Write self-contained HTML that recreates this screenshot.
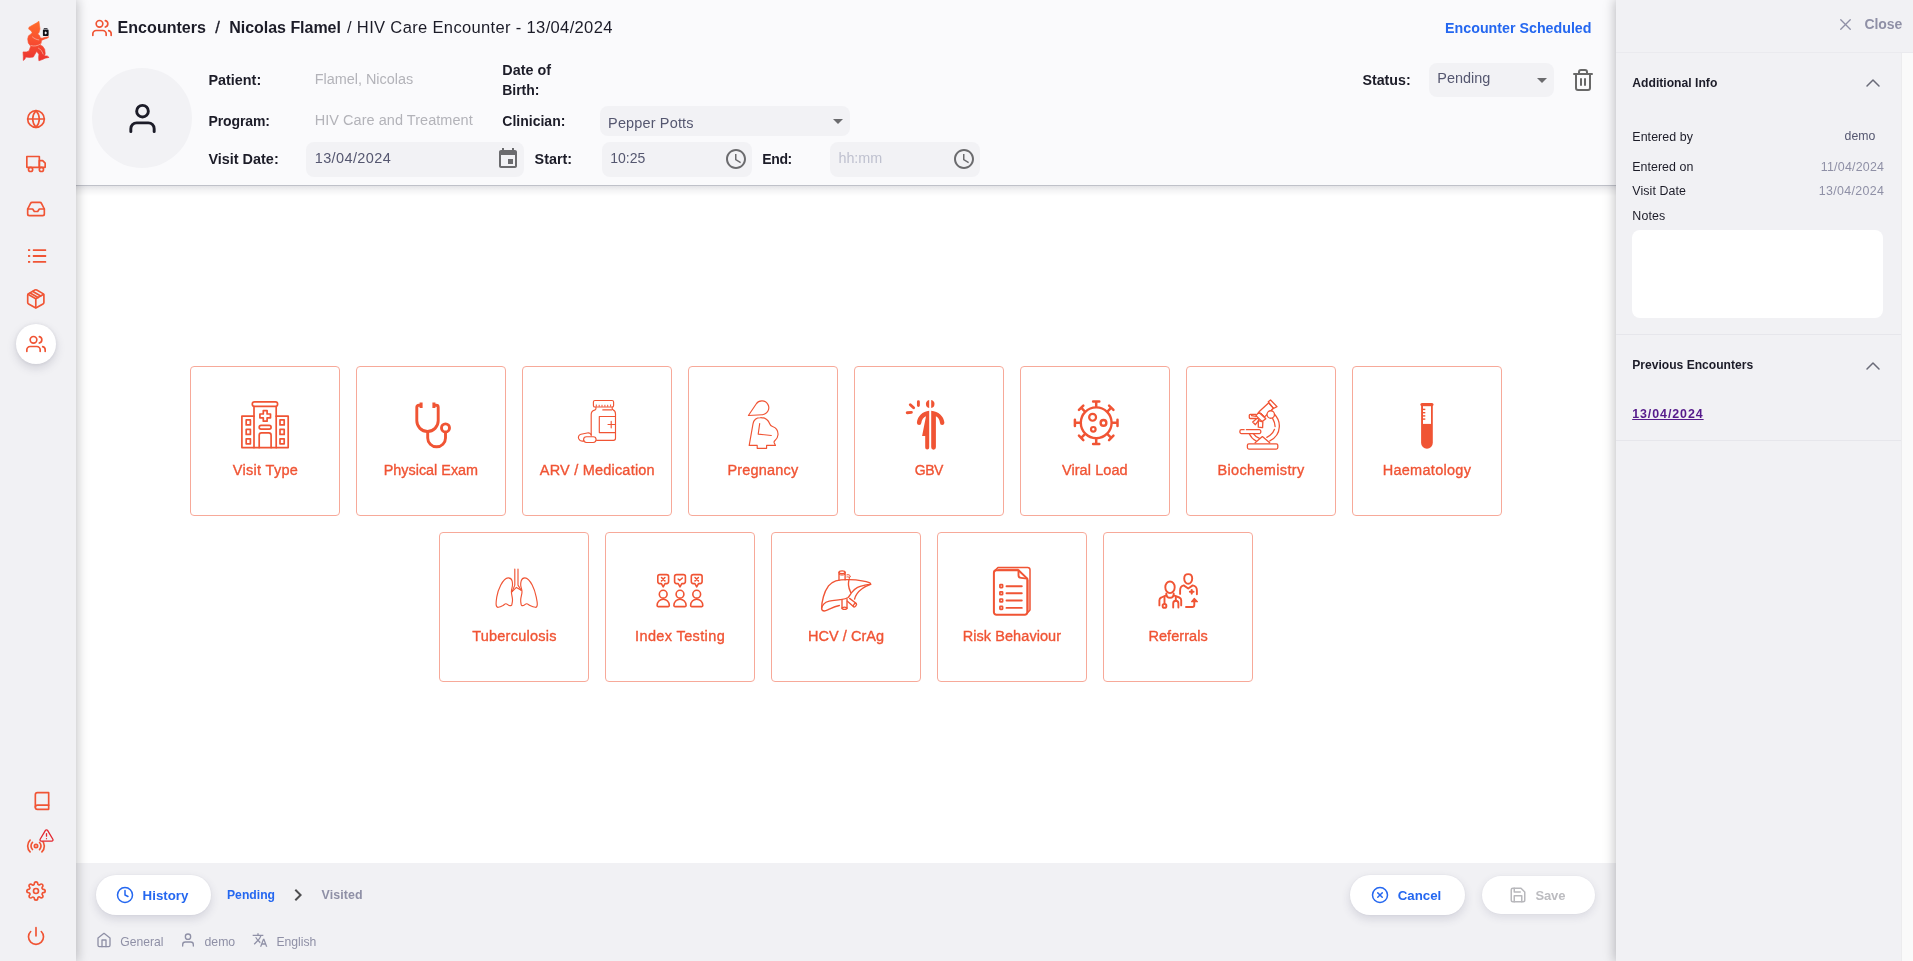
<!DOCTYPE html><html lang="en"><head><meta charset="utf-8"><title>HIV Care Encounter</title><style>*{box-sizing:border-box;margin:0;padding:0}
html,body{width:1913px;height:961px;overflow:hidden;background:#fff;font-family:"Liberation Sans", Arial, sans-serif;color:#1c1c28}
.ab,.ci,.t,.bx{position:absolute}
.t{white-space:nowrap;line-height:1;}
#side{position:absolute;left:0;top:0;width:76px;height:961px;background:#f1f1f4;box-shadow:0 0 11px 1px rgba(20,20,25,.27);z-index:5}
#head{position:absolute;left:76px;top:0;width:1540px;height:185px;background:#fafafc;z-index:2}
#headline{position:absolute;left:76px;top:185px;width:1540px;height:1px;background:#bfc1c9;z-index:2}
#headsh{position:absolute;left:76px;top:186px;width:1540px;height:10px;background:linear-gradient(#e4e4e7,#f4f4f5 45%,#fff);z-index:1}
#foot{position:absolute;left:76px;top:863px;width:1540px;height:98px;background:#f1f1f4;z-index:2}
#panel{position:absolute;left:1616px;top:0;width:297px;height:961px;background:#f1f1f4;box-shadow:0 0 11px 1px rgba(20,20,25,.27);z-index:6}
#track{position:absolute;left:1901px;top:53px;width:12px;height:908px;background:#fafafa;border-left:1px solid #ececee;z-index:7}
.hr{position:absolute;left:1616px;width:285px;height:1px;background:#e6e6eb;z-index:7}
.in{position:absolute;background:#f2f2f5;border-radius:8px}
.card{position:absolute;width:150px;height:150px;border:1px solid #f7a999;border-radius:4px;background:#fff}
.btn{position:absolute;background:#fff;border-radius:20px}
.z{z-index:8;will-change:transform}
</style></head><body><div id="side"></div><div id="head"></div><div id="headline"></div><div id="headsh"></div><div id="foot"></div><div id="panel"></div><div id="track"></div><div class="hr" style="top:52px;width:297px;background:#eaeaee"></div><div class="hr" style="top:334px"></div><div class="hr" style="top:440px"></div><div class="z" style="position:absolute;left:0;top:0;width:1913px;height:961px"><svg class="ab" style="left:0;top:0" width="76" height="76" viewBox="0 0 76 76">
<defs><linearGradient id="lg" x1="0" y1="21" x2="0" y2="61" gradientUnits="userSpaceOnUse"><stop offset="0" stop-color="#ff6c2a"/><stop offset=".45" stop-color="#fa5230"/><stop offset="1" stop-color="#ea3230"/></linearGradient></defs>
<path fill="url(#lg)" stroke="url(#lg)" stroke-width=".6" stroke-linejoin="round" d="M38.900 21.200 39.500 25.400 40 29 39 32.500 37.800 33.900 39.700 35.800 40.200 37.800 42 38.200 45.100 37.300 48.900 36.800 47.200 38.200 44.100 39.200 41.500 40.400 41.100 43 40.200 45.100 42.600 46.200 44.700 49.300 45.200 53.500 44.600 55.900 47.200 55.900 49.100 57.400 45.100 58.200 43 59.300 38.900 60.800 38.600 57.600 38.900 54.500 36.900 51.500 36.300 51.900 33.300 57.100 29.500 57.400 25.900 57.100 24.800 59.300 23.300 60.500 23.300 56.600 23 51.900 26.400 51.900 29 50.900 30.700 46.200 28.300 43 27.700 38.900 28.500 35.800 31.100 33.900 32.100 32.600 31.100 30.700 28.700 29.100 29 27.200 33.200 24.800 36.800 22.800Z"/>
<path d="M31 45.600c3 .9 6.600.4 9.400-1.500M32.500 37c1.800 1.500 3.800 2.600 6.300 2.900M38.500 48.200c2 .8 3.600 3 4.600 5.800" stroke="#f7d9cf" stroke-width=".7" fill="none" stroke-linecap="round" opacity=".8"/>
<path fill="#111118" d="M43.800 28h3.700v.800h-3.700zM43.900 29.600h3.700c.600 0 1 .400 1 1v4.400c0 .600-.400 1-1 1h-3.700c-.600 0-1-.400-1-1v-4.400c0-.600.400-1 1-1z"/>
<path d="M45.700 31.300 47 32.900 45.700 34.500 44.400 32.900z" fill="#f2f2f5"/>
</svg><svg class="ab" style="left:26px;top:109px" width="20" height="20" viewBox="0 0 24 24" fill="none" stroke="#f05434" stroke-width="2" stroke-linecap="round" stroke-linejoin="round" ><circle cx="12" cy="12" r="10"/><line x1="2" y1="12" x2="22" y2="12"/><path d="M12 2a15.3 15.3 0 0 1 4 10 15.3 15.3 0 0 1-4 10 15.3 15.3 0 0 1-4-10 15.3 15.3 0 0 1 4-10z"/></svg><svg class="ab" style="left:26px;top:154px" width="20" height="20" viewBox="0 0 24 24" fill="none" stroke="#f05434" stroke-width="2" stroke-linecap="round" stroke-linejoin="round" ><rect x="1" y="3" width="15" height="13"/><polygon points="16 8 20 8 23 11 23 16 16 16 16 8"/><circle cx="5.5" cy="18.500" r="2.500"/><circle cx="18.500" cy="18.500" r="2.500"/></svg><svg class="ab" style="left:26px;top:199px" width="20" height="20" viewBox="0 0 24 24" fill="none" stroke="#f05434" stroke-width="2" stroke-linecap="round" stroke-linejoin="round" ><polyline points="22 12 16 12 14 15 10 15 8 12 2 12"/><path d="M5.450 5.110L2 12v6a2 2 0 0 0 2 2h16a2 2 0 0 0 2-2v-6l-3.450-6.890A2 2 0 0 0 16.760 4H7.240a2 2 0 0 0-1.790 1.110z"/></svg><svg class="ab" style="left:26px;top:244px" width="22" height="24" viewBox="0 0 22 24" fill="#f05434"><rect x="2" y="5.200" width="2.200" height="1.800"/><rect x="2" y="11.100" width="2.200" height="1.800"/><rect x="2" y="17" width="2.200" height="1.800"/><rect x="6.800" y="5.200" width="13.400" height="1.800" rx=".5"/><rect x="6.800" y="11.100" width="13.400" height="1.800" rx=".5"/><rect x="6.800" y="17" width="13.400" height="1.800" rx=".5"/></svg><svg class="ab" style="left:25.2px;top:287.9px" width="21.6" height="21.6" viewBox="0 0 24 24" fill="none" stroke="#f05434" stroke-width="1.85" stroke-linecap="round" stroke-linejoin="round" ><path d="M21 16V8a2 2 0 0 0-1-1.730l-7-4a2 2 0 0 0-2 0l-7 4A2 2 0 0 0 3 8v8a2 2 0 0 0 1 1.730l7 4a2 2 0 0 0 2 0l7-4A2 2 0 0 0 21 16z"/><polyline points="3.270 6.960 12 12.010 20.730 6.960"/><line x1="12" y1="22.080" x2="12" y2="12"/><line x1="17.500" y1="8.800" x2="8.800" y2="3.800"/><line x1="14.500" y1="10.600" x2="5.700" y2="5.500"/></svg><div class="ab" style="left:16px;top:324px;width:40px;height:40px;border-radius:50%;background:#fff;box-shadow:0 4px 10px rgba(60,60,90,.18),0 0 4px rgba(60,60,90,.08)"></div><svg class="ab" style="left:26px;top:334px" width="20" height="20" viewBox="0 0 24 24" fill="none" stroke="#f05434" stroke-width="2" stroke-linecap="round" stroke-linejoin="round" ><path d="M17 21v-2a4 4 0 0 0-4-4H5a4 4 0 0 0-4 4v2"/><circle cx="9" cy="7" r="4"/><path d="M23 21v-2a4 4 0 0 0-3-3.870"/><path d="M16 3.130a4 4 0 0 1 0 7.750"/></svg><svg class="ab" style="left:32px;top:791px" width="20" height="20" viewBox="0 0 24 24" fill="none" stroke="#f05434" stroke-width="2" stroke-linecap="round" stroke-linejoin="round" ><path d="M4 19.500A2.500 2.500 0 0 1 6.500 17H20"/><path d="M6.500 2H20v20H6.500A2.500 2.500 0 0 1 4 19.500v-15A2.500 2.500 0 0 1 6.500 2z"/></svg><svg class="ab" style="left:26px;top:836px" width="20" height="20" viewBox="0 0 24 24" fill="none" stroke="#f05434" stroke-width="2" stroke-linecap="round" stroke-linejoin="round" ><circle cx="12" cy="12" r="2"/><path d="M16.240 7.760a6 6 0 0 1 0 8.490m-8.480-.010a6 6 0 0 1 0-8.490m11.310-2.820a10 10 0 0 1 0 14.140m-14.140 0a10 10 0 0 1 0-14.140"/></svg><svg class="ab" style="left:38.5px;top:828.4px" width="15" height="15" viewBox="0 0 24 24" fill="none" stroke="#e3262f" stroke-width="2.1" stroke-linecap="round" stroke-linejoin="round" ><path d="M10.290 3.860L1.820 18a2 2 0 0 0 1.710 3h16.940a2 2 0 0 0 1.710-3L13.710 3.860a2 2 0 0 0-3.420 0z" fill="#f1f1f4"/><line x1="12" y1="9" x2="12" y2="13"/><line x1="12" y1="17" x2="12.010" y2="17"/></svg><svg class="ab" style="left:26px;top:881px" width="20" height="20" viewBox="0 0 24 24" fill="none" stroke="#f05434" stroke-width="2" stroke-linecap="round" stroke-linejoin="round" ><circle cx="12" cy="12" r="3"/><path d="M19.400 15a1.650 1.650 0 0 0 .330 1.820l.060.060a2 2 0 0 1 0 2.830 2 2 0 0 1-2.830 0l-.060-.060a1.650 1.650 0 0 0-1.820-.330 1.650 1.650 0 0 0-1 1.510V21a2 2 0 0 1-2 2 2 2 0 0 1-2-2v-.090A1.650 1.650 0 0 0 9 19.400a1.650 1.650 0 0 0-1.820.330l-.060.060a2 2 0 0 1-2.830 0 2 2 0 0 1 0-2.830l.060-.060a1.650 1.650 0 0 0 .330-1.820 1.650 1.650 0 0 0-1.510-1H3a2 2 0 0 1-2-2 2 2 0 0 1 2-2h.090A1.650 1.650 0 0 0 4.600 9a1.650 1.650 0 0 0-.330-1.820l-.060-.060a2 2 0 0 1 0-2.830 2 2 0 0 1 2.830 0l.060.060a1.650 1.650 0 0 0 1.820.330H9a1.650 1.650 0 0 0 1-1.510V3a2 2 0 0 1 2-2 2 2 0 0 1 2 2v.090a1.650 1.650 0 0 0 1 1.510 1.650 1.650 0 0 0 1.820-.330l.060-.060a2 2 0 0 1 2.830 0 2 2 0 0 1 0 2.830l-.060.060a1.650 1.650 0 0 0-.330 1.820V9a1.650 1.650 0 0 0 1.510 1H21a2 2 0 0 1 2 2 2 2 0 0 1-2 2h-.090a1.650 1.650 0 0 0-1.510 1z"/></svg><svg class="ab" style="left:26px;top:926px" width="20" height="20" viewBox="0 0 24 24" fill="none" stroke="#f05434" stroke-width="2" stroke-linecap="round" stroke-linejoin="round" ><path d="M18.360 6.640a9 9 0 1 1-12.730 0"/><line x1="12" y1="2" x2="12" y2="12"/></svg><svg class="ab" style="left:92px;top:17.5px" width="20" height="20" viewBox="0 0 24 24" fill="none" stroke="#f05434" stroke-width="2" stroke-linecap="round" stroke-linejoin="round" ><path d="M17 21v-2a4 4 0 0 0-4-4H5a4 4 0 0 0-4 4v2"/><circle cx="9" cy="7" r="4"/><path d="M23 21v-2a4 4 0 0 0-3-3.870"/><path d="M16 3.130a4 4 0 0 1 0 7.750"/></svg><div class="ab" style="left:92px;top:68px;width:100px;height:100px;border-radius:50%;background:#f2f2f5"></div><svg class="ab" style="left:124.5px;top:101px" width="35" height="35" viewBox="0 0 24 24" fill="none" stroke="#1c1c28" stroke-width="2" stroke-linecap="round" stroke-linejoin="round" ><path d="M20 21v-2a4 4 0 0 0-4-4H8a4 4 0 0 0-4 4v2"/><circle cx="12" cy="7" r="4"/></svg><div class="in" style="left:306px;top:142px;width:218px;height:35px"></div><svg class="ab" style="left:496px;top:147px" width="24" height="24" viewBox="0 0 24 24" fill="#6b6b6e"><path d="M17 12h-5v5h5v-5zM16 1v2H8V1H6v2H5c-1.110 0-1.990.900-1.990 2L3 19c0 1.100.890 2 2 2h14c1.100 0 2-.900 2-2V5c0-1.100-.900-2-2-2h-1V1h-2zm3 18H5V8h14v11z"/></svg><div class="in" style="left:600px;top:106px;width:250px;height:30px"></div><svg class="ab" style="left:825.5px;top:108.7px" width="24" height="24" viewBox="0 0 24 24" fill="#6b6b6e"><path d="M7 10l5 5 5-5z"/></svg><div class="in" style="left:602px;top:142px;width:150px;height:34.500px"></div><svg class="ab" style="left:724px;top:147px" width="24" height="24" viewBox="0 0 24 24" fill="#6b6b6e"><path d="M11.990 2C6.470 2 2 6.480 2 12s4.470 10 9.990 10C17.520 22 22 17.520 22 12S17.520 2 11.990 2zM12 20c-4.420 0-8-3.580-8-8s3.580-8 8-8 8 3.580 8 8-3.580 8-8 8zM12.500 7H11v6l5.250 3.150.750-1.230-4.500-2.670z"/></svg><div class="in" style="left:830px;top:142px;width:150px;height:34.500px"></div><svg class="ab" style="left:952px;top:147px" width="24" height="24" viewBox="0 0 24 24" fill="#6b6b6e"><path d="M11.990 2C6.470 2 2 6.480 2 12s4.470 10 9.990 10C17.520 22 22 17.520 22 12S17.520 2 11.990 2zM12 20c-4.420 0-8-3.580-8-8s3.580-8 8-8 8 3.580 8 8-3.580 8-8 8zM12.500 7H11v6l5.250 3.150.750-1.230-4.500-2.670z"/></svg><div class="in" style="left:1429px;top:63px;width:125px;height:34px"></div><svg class="ab" style="left:1530px;top:68px" width="24" height="24" viewBox="0 0 24 24" fill="#6b6b6e"><path d="M7 10l5 5 5-5z"/></svg><svg class="ab" style="left:1571px;top:68px" width="24" height="24" viewBox="0 0 24 24" fill="none" stroke="#686868" stroke-width="2" stroke-linecap="round" stroke-linejoin="round" style="stroke-linecap:butt"><polyline points="3 6 5 6 21 6"/><path d="M19 6v14a2 2 0 0 1-2 2H7a2 2 0 0 1-2-2V6m3 0V4a2 2 0 0 1 2-2h4a2 2 0 0 1 2 2v2"/><line x1="10" y1="11" x2="10" y2="17"/><line x1="14" y1="11" x2="14" y2="17"/></svg><svg class="ab" style="left:1836px;top:14.7px" width="19" height="19" viewBox="0 0 24 24" fill="none" stroke="#8f90a6" stroke-width="1.7" stroke-linecap="round" stroke-linejoin="round" ><line x1="18" y1="6" x2="6" y2="18"/><line x1="6" y1="6" x2="18" y2="18"/></svg><svg class="ab" style="left:1861px;top:71px" width="24" height="24" viewBox="0 0 24 24" fill="none" stroke="#6a6b78" stroke-width="1.5" stroke-linecap="round" stroke-linejoin="round" ><polyline points="18 15 12 9 6 15"/></svg><svg class="ab" style="left:1861px;top:354px" width="24" height="24" viewBox="0 0 24 24" fill="none" stroke="#6a6b78" stroke-width="1.5" stroke-linecap="round" stroke-linejoin="round" ><polyline points="18 15 12 9 6 15"/></svg><div class="ab" style="left:1632px;top:230px;width:251px;height:88px;border-radius:8px;background:#fff"></div><div class="btn" style="left:96px;top:875px;width:115px;height:40px;box-shadow:0 4px 10px rgba(60,60,100,.16),0 0 3px rgba(60,60,100,.06)"></div><svg class="ab" style="left:116px;top:886.2px" width="18" height="18" viewBox="0 0 24 24" fill="none" stroke="#2467f0" stroke-width="2" stroke-linecap="round" stroke-linejoin="round" ><circle cx="12" cy="12" r="10"/><polyline points="12 6 12 12 16 14"/></svg><svg class="ab" style="left:285.8px;top:883px" width="24" height="24" viewBox="0 0 24 24" fill="#4e4e50"><path d="M10 6L8.590 7.410 13.170 12l-4.580 4.590L10 18l6-6z"/></svg><svg class="ab" style="left:96px;top:932px" width="16" height="16" viewBox="0 0 24 24" fill="none" stroke="#8f90a6" stroke-width="2" stroke-linecap="round" stroke-linejoin="round" ><path d="M3 9l9-7 9 7v11a2 2 0 0 1-2 2H5a2 2 0 0 1-2-2z"/><polyline points="9 22 9 12 15 12 15 22"/></svg><svg class="ab" style="left:180px;top:932px" width="16" height="16" viewBox="0 0 24 24" fill="none" stroke="#8f90a6" stroke-width="2" stroke-linecap="round" stroke-linejoin="round" ><path d="M20 21v-2a4 4 0 0 0-4-4H8a4 4 0 0 0-4 4v2"/><circle cx="12" cy="7" r="4"/></svg><svg class="ab" style="left:252.3px;top:932.3px" width="16" height="16" viewBox="0 0 24 24" fill="#8f90a6"><path d="M12.870 15.070l-2.540-2.510.030-.030c1.740-1.940 2.980-4.170 3.710-6.530H17V4h-7V2H8v2H1v1.990h11.170C11.500 7.920 10.440 9.750 9 11.350 8.070 10.320 7.300 9.190 6.690 8h-2c.730 1.630 1.730 3.170 2.980 4.560l-5.090 5.020L4 19l5-5 3.110 3.110.760-2.040zM18.500 10h-2L12 22h2l1.120-3h4.750L21 22h2l-4.500-12zm-2.620 7l1.620-4.330L19.120 17h-3.240z"/></svg><div class="btn" style="left:1350px;top:875px;width:115px;height:40px;box-shadow:0 4px 10px rgba(60,60,100,.16),0 0 3px rgba(60,60,100,.06)"></div><svg class="ab" style="left:1371px;top:886px" width="18" height="18" viewBox="0 0 24 24" fill="none" stroke="#2467f0" stroke-width="2" stroke-linecap="round" stroke-linejoin="round" ><circle cx="12" cy="12" r="10"/><line x1="15" y1="9" x2="9" y2="15"/><line x1="9" y1="9" x2="15" y2="15"/></svg><div class="btn" style="left:1482px;top:876px;width:113px;height:38px;box-shadow:0 3px 8px rgba(60,60,100,.12),0 0 2px rgba(60,60,100,.06)"></div><svg class="ab" style="left:1509px;top:886px" width="18" height="18" viewBox="0 0 24 24" fill="none" stroke="#b8b8bc" stroke-width="2" stroke-linecap="round" stroke-linejoin="round" ><path d="M19 21H5a2 2 0 0 1-2-2V5a2 2 0 0 1 2-2h11l5 5v11a2 2 0 0 1-2 2z"/><polyline points="17 21 17 13 7 13 7 21"/><polyline points="7 3 7 8 15 8"/></svg><div class="card" style="left:190px;top:366px"></div><svg class="ci" style="left:230px;top:390px" width="70" height="70" viewBox="0 0 70 70" fill="none" stroke="#f05434" stroke-linecap="round" stroke-linejoin="round" ><g stroke-width="1.7">
<rect x="22.3" y="11.9" width="25.3" height="4.5" rx="2.2"/>
<path d="M24 16.6V57.6M46.2 16.6V57.6"/>
<path d="M24 26.2H11.900V57.600H58.200V26.200H46.200"/>
<rect x="16.2" y="29.9" width="4.2" height="5"/><rect x="16.2" y="39.4" width="4.2" height="5"/><rect x="16.2" y="48.8" width="4.2" height="5"/>
<rect x="50" y="29.9" width="4.2" height="5"/><rect x="50" y="39.4" width="4.2" height="5"/><rect x="50" y="48.8" width="4.2" height="5"/>
<path d="M33.3 20.6h3.8v3.4h3.4v3.8h-3.4v3.4h-3.8v-3.4h-3.4v-3.8h3.4z" stroke-linejoin="round"/>
<rect x="29.2" y="35.4" width="11.9" height="3.7" rx="1.85"/>
<path d="M29.2 57.6V45.2a2.3 2.3 0 0 1 2.3-2.3h7.3a2.3 2.3 0 0 1 2.3 2.3V57.6"/>
</g></svg><div class="card" style="left:356px;top:366px"></div><svg class="ci" style="left:396px;top:390px" width="70" height="70" viewBox="0 0 70 70" fill="none" stroke="#f05434" stroke-linecap="round" stroke-linejoin="round" ><g stroke-width="2.9" stroke-linecap="butt">
<path d="M25.1 15.3H22.8a2 2 0 0 0-2 2V30.8a10.7 10.7 0 0 0 21.4 0V17.3a2 2 0 0 0-2-2H37.9"/>
<path d="M25.1 12.6V18.1M37.9 12.6V18.1" stroke-width="3" stroke-linecap="butt"/>
<path d="M31.7 41.5V47.9a8.9 8.9 0 0 0 17.8 0V42.6"/>
<circle cx="49.5" cy="37.9" r="4"/>
</g></svg><div class="card" style="left:522px;top:366px"></div><svg class="ci" style="left:562px;top:390px" width="70" height="70" viewBox="0 0 70 70" fill="none" stroke="#f05434" stroke-linecap="round" stroke-linejoin="round" ><g stroke-width="1.15">
<rect x="31.4" y="10.5" width="20.2" height="6.5" rx="1.6"/>
<path d="M34.3 14.9v1.4M37.2 15.2v1.2M40 15.2v1.2M42.9 15.2v1.2M45.7 15.2v1.2M48.6 14.9v1.4" stroke-width="1"/>
<path d="M33.9 17.2v1.6c0 .8-.6 1.1-1.4 1.3-2 .5-3.3 2.2-3.3 4.4V46"/>
<path d="M50.2 17.2v1.6c0 .6.3.9.9 1.1 1.6.6 2.4 2.200 2.400 4.200V48.300a2 2 0 0 1-2 2H34.600"/>
<path d="M40.800 19.900h8.700"/>
<path d="M53.400 26.500H37.300V42.600H53.400"/>
<path d="M49.200 31.400v6.400M46 34.500h6.600"/>
<rect x="21.600" y="46.700" width="12.500" height="5.800" rx="2.900"/>
<path d="M21.900 50.900c-1.800.6-4.200-.2-5.200-2.200-.9-2 .2-3.900 2.300-4.500l6.200-1.200c1.500-.3 3.100.200 3.800 1.500"/>
</g></svg><div class="card" style="left:688px;top:366px"></div><svg class="ci" style="left:728px;top:390px" width="70" height="70" viewBox="0 0 70 70" fill="none" stroke="#f05434" stroke-linecap="round" stroke-linejoin="round" ><g stroke-width="1.15">
<path d="M20.400 25.500 28.160 13.950A6.900 6.900 0 1 1 34.300 24.700Z"/>
<path d="M21.200 55.400 25 33.800c.7-3.800 3.600-6.200 7.400-6.200 4.500-.1 7.700 2.100 9.300 6.200.5 1.400 1.300 2.200 2.800 2.700 3.700 1.300 5.700 4.400 5.500 8.200-.100 2.400-1.300 4.300-3.200 6-.700.600-.900 1.200-.600 2l1.300 2.700H38.600v2.900H29.200v-2.900z"/>
<path d="M31.700 33.500 30.200 44.100 43.300 45.500"/>
</g></svg><div class="card" style="left:854px;top:366px"></div><svg class="ci" style="left:894px;top:390px" width="70" height="70" viewBox="0 0 70 70" fill="none" stroke="#f05434" stroke-linecap="round" stroke-linejoin="round" ><g fill="#f05434" stroke="none">
<path d="M35.200 9.900a4.200 4.200 0 0 0 0 8.200z"/>
<path d="M37.200 9.900a4.200 4.200 0 0 1 0 8.200z"/>
<path d="M35.200 20.700V57.600a2 2 0 0 1-4 0V45.900H28.100L32 26.200c-2.400 1.100-4.400 3.400-4.700 6.700a2.200 2.200 0 0 1-4.400-.4c.700-6.400 5.600-11.300 12.300-11.800z"/>
<path d="M37.200 20.700V57.300a2.350 2.350 0 0 0 4.700 0V26.200c2.200 1.100 3.800 3.400 4.100 6.700a2.200 2.200 0 0 0 4.400-.4c-.700-6.400-5.900-11.300-13.200-11.800z"/>
</g>
<g stroke-width="2.9">
<path d="M24.400 11.800V15.600M16.300 14.700l3.300 3.100M13.200 22.700l4.200-.300"/>
</g></svg><div class="card" style="left:1020px;top:366px"></div><svg class="ci" style="left:1060px;top:390px" width="70" height="70" viewBox="0 0 70 70" fill="none" stroke="#f05434" stroke-linecap="round" stroke-linejoin="round" ><circle cx="36.2" cy="32.8" r="15.4" stroke-width="2.4"/><path d="M36.20 16.60L36.20 11.50M33.10 11.50L39.30 11.50M47.66 21.34L51.26 17.74M49.07 15.55L53.45 19.93M52.40 32.80L57.50 32.80M57.50 29.70L57.50 35.90M47.66 44.26L51.26 47.86M53.45 45.67L49.07 50.05M36.20 49.00L36.20 54.10M39.30 54.10L33.10 54.10M24.74 44.26L21.14 47.86M23.33 50.05L18.95 45.67M20.00 32.80L14.90 32.80M14.90 35.90L14.90 29.70M24.74 21.34L21.14 17.74M18.95 19.93L23.33 15.55" stroke-width="2.5"/><circle cx="32.6" cy="27.3" r="3.45" stroke-width="2.2"/><circle cx="43.5" cy="32.9" r="2.85" stroke-width="2.4"/><circle cx="33.3" cy="39.3" r="2.3" stroke-width="2.2"/></svg><div class="card" style="left:1186px;top:366px"></div><svg class="ci" style="left:1226px;top:390px" width="70" height="70" viewBox="0 0 70 70" fill="none" stroke="#f05434" stroke-linecap="round" stroke-linejoin="round" ><g stroke-width="1.3">
<rect x="21.400" y="53.800" width="30.400" height="5.300" rx="1.500"/>
<path d="M18.100 39.700H15.400a1.500 1.500 0 0 0-1.500 1.500v.900a1.500 1.500 0 0 0 1.500 1.500H33.300a1.500 1.500 0 0 0 1.500-1.500V41.200a1.500 1.500 0 0 0-1.500-1.500H20.400"/>
<path d="M44.550 10 51 16.600 47.500 18.500 42.300 11.800z"/>
<path d="M42.900 13.300 47.300 18.100" stroke-width="1.100"/>
<path d="M42.500 13.100 33.300 21.600M47.050 18.500 39.100 26.400"/>
<path d="M32.800 22.200 39.800 28.700 36.200 31.600 30 25.600z"/>
<path d="M34.800 22.900 39.100 27" stroke-width="1"/>
<path d="M30 24.300H24.300a1 1 0 0 0-1 1v2.200a1 1 0 0 0 1 1h5.600M30.400 26.400 25.400 25.700" />
<path d="M31.400 28.100 33.100 29.900 29.400 34.700 26.700 32z"/>
<path d="M32.300 30.600 36.850 31.800 36.600 37.600 32.300 37.200z"/>
<circle cx="44.760" cy="24.500" r="3.750" fill="#fff"/>
<path d="M48.500 24.300C52.500 28.500 53.600 33 53.300 37 53 43 49.500 48 43.700 51"/>
<path d="M46.600 28.300C48.200 31 49 34 49.100 36.600M48.500 39.300C47.300 42.800 44.600 45.600 40.800 47.300"/>
<path d="M29.100 52.800 36.400 46.600 43.700 52.800"/>
<path d="M23.300 43.700C24.800 47 27 49.400 30.200 51M27.300 43.700C28.800 45.900 30.800 47.500 33.500 48.400"/>
</g></svg><div class="card" style="left:1352px;top:366px"></div><svg class="ci" style="left:1392px;top:390px" width="70" height="70" viewBox="0 0 70 70" fill="none" stroke="#f05434" stroke-linecap="round" stroke-linejoin="round" ><g stroke="none" fill="#f05434">
<rect x="28.400" y="13.100" width="13.100" height="3" rx="1.500"/>
<path d="M29.100 14.500H40.800V52.800a5.850 5.850 0 0 1-11.700 0z"/>
<rect x="31" y="16.200" width="8" height="17.700" fill="#fff"/>
<rect x="31" y="18.700" width="2.300" height="1.400"/><rect x="31" y="22" width="2.300" height="1.400"/><rect x="31" y="25.200" width="2.300" height="1.400"/><rect x="31" y="28.400" width="2.300" height="1.400"/>
</g></svg><div class="card" style="left:439px;top:532px"></div><svg class="ci" style="left:479px;top:556px" width="70" height="70" viewBox="0 0 70 70" fill="none" stroke="#f05434" stroke-linecap="round" stroke-linejoin="round" ><g stroke-width="1.15">
<path d="M35.800 13.100V29.100L33.100 35.600M39 13.100V29.100L42.200 34.300"/>
<path d="M33.100 35.600 37.400 31.400 42.200 34.300"/>
<path d="M29.100 21.800c-2.600 0-5.200 3.200-7.300 7.300-1.900 3.700-3.400 7.700-4 11.700-.400 2.700-.800 5.100-.700 7.300.100 2.500 1 3.300 2.200 3.200 1.800-.100 3.200-.900 4.700-1.800 1.100-.700 1.800-1.800 2.900-1.800 1.300 0 2.100 1.500 3.300 1.800 1.200.300 2.400.200 2.600-.700.500-2.300.800-3.300.700-5.100-.100-2.700-1.100-5.300-1.100-8 0-2.400 1-4.300 1.100-6.600.100-1.600-.100-2.900-.400-4.300-.500-2.100-2.200-3-4-3z"/>
<path d="M45.900 21.800c2.600 0 5.200 3.200 7.300 7.300 1.900 3.700 3.200 7.700 4 11.700.500 2.700 1.100 5.100 1.100 7.300 0 2.500-.800 3.300-1.900 3.200-1.800-.100-3.700-.900-5.400-1.800-1.300-.700-2.200-1.800-3.300-1.800-1.300 0-2.100 1.500-3.300 1.800-1.200.300-2.100.200-2.200-.700-.400-2.300-.600-3.300-.500-5.100.100-2.700 1.300-5.300 1.300-8 0-2.400-1.200-4.300-1.300-6.600-.100-1.600.100-2.900.500-4.300.600-2.100 1.900-3 3.700-3z"/>
</g></svg><div class="card" style="left:605px;top:532px"></div><svg class="ci" style="left:645px;top:556px" width="70" height="70" viewBox="0 0 70 70" fill="none" stroke="#f05434" stroke-linecap="round" stroke-linejoin="round" ><g stroke-width="1.6"><path d="M16.4 27.600H14.8a2 2 0 0 1-2-2V20.600a2 2 0 0 1 2-2H21.6a2 2 0 0 1 2 2V25.600a2 2 0 0 1-2 2H20.0L18.2 30.900z"/><path d="M16.5 21.500 19.9 24.900M19.9 21.500 16.5 24.900" stroke-width="1.5"/><circle cx="18.2" cy="38.200" r="3.900"/><path d="M12.1 49.600c0-3.700 2.700-6.300 6.100-6.300s6.100 2.600 6.100 6.300a1 1 0 0 1-1 1H13.1a1 1 0 0 1-1-1z"/><path d="M33.2 27.600H31.6a2 2 0 0 1-2-2V20.600a2 2 0 0 1 2-2H38.4a2 2 0 0 1 2 2V25.600a2 2 0 0 1-2 2H36.8L35.0 30.900z"/><path d="M33.1 23.100 34.6 24.600 37.4 21.900" stroke-width="1.4"/><circle cx="35" cy="38.200" r="3.900"/><path d="M28.9 49.600c0-3.700 2.700-6.300 6.100-6.300s6.100 2.600 6.100 6.300a1 1 0 0 1-1 1H29.9a1 1 0 0 1-1-1z"/><path d="M49.9 27.600H48.3a2 2 0 0 1-2-2V20.600a2 2 0 0 1 2-2H55.1a2 2 0 0 1 2 2V25.600a2 2 0 0 1-2 2H53.5L51.7 30.900z"/><path d="M50.0 21.500 53.4 24.900M53.4 21.500 50.0 24.900" stroke-width="1.5"/><circle cx="51.7" cy="38.200" r="3.900"/><path d="M45.6 49.600c0-3.700 2.700-6.300 6.100-6.300s6.100 2.600 6.100 6.300a1 1 0 0 1-1 1H46.6a1 1 0 0 1-1-1z"/></g></svg><div class="card" style="left:771px;top:532px"></div><svg class="ci" style="left:811px;top:556px" width="70" height="70" viewBox="0 0 70 70" fill="none" stroke="#f05434" stroke-linecap="round" stroke-linejoin="round" ><g stroke-width="1.35">
<path d="M28.400 49.500c-3.500.800-6.600 2-9.500 3.300-2.200 1-4.100 2.200-5.600 2.200-1.700 0-2.700-1.100-2.700-2.800 0-4.200.800-7.700 1.800-11.400 1.200-4.400 2.900-7.900 5.100-10.900 2-2.700 4.400-4.200 7.300-5.100 4.400-1 8.700-1.200 13.100-1.100 4.400.100 8.800.400 13.100 1.100 2.500.400 5.100.900 7.300 1.800 1 .400 1.500 1.200 1.300 1.800"/>
<path d="M59.600 28.400c-2.200.100-3.900.300-5.700.700-2.600.600-5.100 1.100-7.300 2.200-2.400 1.200-4.200 3-5.800 5.100-1.300 1.700-2.200 3.700-3.700 5.100-2.200 1.500-5.100 1.800-8 2.200-3.600.500-7.300.700-10.900 1.500-2.200.500-4.100 1.300-5.500 2.900-1 1.200-1.700 2.600-2.100 4.300"/>
<path d="M59.600 28.400c-3.300 1.100-6.200 2.500-8.600 4.400-2 1.500-3.800 3.100-5.100 5.100-1.100 1.600-1.800 3.300-2.300 5.100"/>
<path d="M37.900 23.700c-.300 1.900-.500 3.600-.400 5.400.200 2.600 1.100 4.900 2.200 7.300"/>
<path d="M28 24.100V16.300M34.100 23.800V16.300"/><ellipse cx="31.050" cy="16.300" rx="3.050" ry="1.400"/>
<path d="M28.200 18.400c1.500 1 4.200 1 5.700 0" stroke-width="1"/>
<path d="M35.900 18.800c1.800-.500 3.300.200 3.500 1.600M35.900 20.900c1.300-.300 2.200.100 2.400 1M38.900 20.600c-.200 1.100-.800 2.300-1 3" stroke-width="1"/>
<path d="M31 43.600V52.200M36 43V52.200"/><ellipse cx="33.500" cy="52.200" rx="2.500" ry="1.100"/>
<path d="M36.400 45.300 42.400 50.600M38.600 42.400 45 47.300"/><ellipse cx="43.900" cy="49.100" rx="1.200" ry="2.100" transform="rotate(38 43.900 49.100)"/>
</g></svg><div class="card" style="left:937px;top:532px"></div><svg class="ci" style="left:977px;top:556px" width="70" height="70" viewBox="0 0 70 70" fill="none" stroke="#f05434" stroke-linecap="round" stroke-linejoin="round" ><g stroke-width="2">
<path d="M41.500 14.200H19.400a2.500 2.500 0 0 0-2.500 2.500V56.300a2.500 2.500 0 0 0 2.500 2.500H47.800a2.500 2.500 0 0 0 2.500-2.500V22.600z"/>
<path d="M41.500 14.400V19.300a2.600 2.600 0 0 0 2.600 2.600l6 .700" stroke-width="1.900"/>
<path d="M17.400 15.100 21 11.400H50.600a2.400 2.400 0 0 1 2.400 2.400V54.100L49.700 57.700" stroke-width="1.500"/>
<path d="M21.500 13.300H41" stroke-width="1"/>
<path d="M51.700 24V55" stroke-width=".6"/>
<rect x="22.900" y="28.700" width="2.700" height="2.900" rx=".5" stroke-width="1.700"/><rect x="22.900" y="35.800" width="2.700" height="2.900" rx=".5" stroke-width="1.700"/><rect x="22.900" y="43" width="2.700" height="2.900" rx=".5" stroke-width="1.700"/><rect x="22.900" y="50.400" width="2.700" height="2.900" rx=".5" stroke-width="1.700"/>
<path d="M29.500 30.200H44.800M29.500 37.300H44.800M29.500 44.500H44.800M29.500 51.900H44.800" stroke-width="1.900"/>
</g></svg><div class="card" style="left:1103px;top:532px"></div><svg class="ci" style="left:1143px;top:556px" width="70" height="70" viewBox="0 0 70 70" fill="none" stroke="#f05434" stroke-linecap="round" stroke-linejoin="round" ><g stroke-width="1.9">
<ellipse cx="27" cy="31.300" rx="4.700" ry="5.800"/>
<path d="M23.300 37.400c0 2.700 1.600 4.400 3.700 4.400s3.700-1.700 3.700-4.400"/>
<path d="M23.200 39.300 18.300 41.500c-1.200.500-1.900 1.500-1.900 2.800V49.400M30.800 39.300 36.300 41.500c1.200.500 1.900 1.500 1.900 2.800V49.400"/>
<path d="M21.500 40.800V47.600M32.800 40.800V44.700"/>
<circle cx="21.500" cy="49.900" r="1.900"/>
<path d="M30.200 51.600V47.400a2.600 2.600 0 0 1 5.200 0V51.600"/>
<path d="M45.200 18.100c2.500 0 4 1.900 4 4.300 0 2.900-1.800 5.400-4 5.400s-4-2.500-4-5.400c0-2.400 1.500-4.300 4-4.300z"/>
<path d="M37.100 37.900V34.500c0-2.900 1.500-4.700 3.600-5.100L45.200 32.500 49.700 29.400c2.400.400 4.200 2.200 4.200 5.100V38.200"/>
<path d="M48.700 34v3.600M46.900 35.800h3.600" stroke-width="2.100"/>
<path d="M43 51H49.300a2 2 0 0 0 2-2V45.500"/>
<path d="M48.600 45.700 51.300 42.400 54.400 45.700z" fill="#f05434" stroke-width="1.200"/>
</g></svg><span class="t" id="t0" style="left:117.60px;top:18.60px;font-size:16.07px;font-weight:700;color:#1c1c28;letter-spacing:0.003px;">Encounters</span><span class="t" id="t1" style="left:215.30px;top:19.60px;font-size:16.53px;font-weight:400;color:#1c1c28;letter-spacing:0.006px;-webkit-text-stroke:.3px #1c1c28;">/</span><span class="t" id="t2" style="left:229.30px;top:19.60px;font-size:16.0px;font-weight:700;color:#1c1c28;letter-spacing:-0.034px;">Nicolas Flamel</span><span class="t" id="t3" style="left:347.00px;top:19.60px;font-size:16.56px;font-weight:400;color:#1c1c28;letter-spacing:0.331px;">/ HIV Care Encounter - 13/04/2024</span><span class="t" id="t4" style="left:1445.10px;top:21.00px;font-size:14.24px;font-weight:700;color:#2467f0;letter-spacing:0.004px;">Encounter Scheduled</span><span class="t" id="t5" style="left:208.40px;top:73.10px;font-size:14.4px;font-weight:700;color:#1c1c28;letter-spacing:0.003px;">Patient:</span><span class="t" id="t6" style="left:208.40px;top:114.00px;font-size:14.0px;font-weight:700;color:#1c1c28;letter-spacing:-0.091px;">Program:</span><span class="t" id="t7" style="left:208.40px;top:151.70px;font-size:14.43px;font-weight:700;color:#1c1c28;letter-spacing:0.003px;">Visit Date:</span><span class="t" id="t8" style="left:502.30px;top:62.70px;font-size:14.37px;font-weight:700;color:#1c1c28;letter-spacing:0.005px;">Date of</span><span class="t" id="t9" style="left:502.30px;top:82.80px;font-size:14.0px;font-weight:700;color:#1c1c28;letter-spacing:-0.066px;">Birth:</span><span class="t" id="t10" style="left:502.30px;top:114.00px;font-size:14.02px;font-weight:700;color:#1c1c28;letter-spacing:0.002px;">Clinician:</span><span class="t" id="t11" style="left:534.60px;top:151.70px;font-size:14.36px;font-weight:700;color:#1c1c28;letter-spacing:0.000px;">Start:</span><span class="t" id="t12" style="left:762.20px;top:151.70px;font-size:14.0px;font-weight:700;color:#1c1c28;letter-spacing:-0.336px;">End:</span><span class="t" id="t13" style="left:1362.40px;top:72.90px;font-size:14.25px;font-weight:700;color:#1c1c28;letter-spacing:0.001px;">Status:</span><span class="t" id="t14" style="left:314.70px;top:72.30px;font-size:14.41px;font-weight:400;color:#b3b3b9;letter-spacing:0.002px;">Flamel, Nicolas</span><span class="t" id="t15" style="left:314.70px;top:112.90px;font-size:14.49px;font-weight:400;color:#b3b3b9;letter-spacing:0.048px;">HIV Care and Treatment</span><span class="t" id="t16" style="left:314.70px;top:150.90px;font-size:14.49px;font-weight:400;color:#555770;letter-spacing:0.400px;">13/04/2024</span><span class="t" id="t17" style="left:608.10px;top:116.20px;font-size:14.49px;font-weight:400;color:#555770;letter-spacing:0.150px;">Pepper Potts</span><span class="t" id="t18" style="left:610.30px;top:151.00px;font-size:14.0px;font-weight:400;color:#555770;letter-spacing:-0.037px;">10:25</span><span class="t" id="t19" style="left:838.40px;top:151.00px;font-size:14.36px;font-weight:400;color:#bfc1cf;letter-spacing:0.002px;">hh:mm</span><span class="t" id="t20" style="left:1437.30px;top:70.70px;font-size:14.44px;font-weight:400;color:#555770;letter-spacing:0.000px;">Pending</span><span class="t" id="t21" style="left:1864.40px;top:17.00px;font-size:14.0px;font-weight:700;color:#8f90a6;letter-spacing:-0.056px;">Close</span><span class="t" id="t22" style="left:1632.30px;top:77.00px;font-size:12.15px;font-weight:700;color:#1c1c28;letter-spacing:0.002px;">Additional Info</span><span class="t" id="t23" style="left:1632.30px;top:130.90px;font-size:12.42px;font-weight:400;color:#1c1c28;letter-spacing:0.076px;">Entered by</span><span class="t" id="t24" style="left:1844.60px;top:129.80px;font-size:12.27px;font-weight:400;color:#555770;letter-spacing:0.004px;">demo</span><span class="t" id="t25" style="left:1632.30px;top:160.70px;font-size:12.42px;font-weight:400;color:#1c1c28;letter-spacing:0.033px;">Entered on</span><span class="t" id="t26" style="left:1820.80px;top:160.70px;font-size:12.42px;font-weight:400;color:#8f90a6;letter-spacing:0.225px;">11/04/2024</span><span class="t" id="t27" style="left:1632.30px;top:184.70px;font-size:12.42px;font-weight:400;color:#1c1c28;letter-spacing:0.092px;">Visit Date</span><span class="t" id="t28" style="left:1818.70px;top:184.70px;font-size:12.42px;font-weight:400;color:#8f90a6;letter-spacing:0.356px;">13/04/2024</span><span class="t" id="t29" style="left:1632.30px;top:209.80px;font-size:12.42px;font-weight:400;color:#1c1c28;letter-spacing:0.120px;">Notes</span><span class="t" id="t30" style="left:1632.20px;top:359.20px;font-size:12.1px;font-weight:700;color:#1c1c28;letter-spacing:0.001px;">Previous Encounters</span><span class="t" id="t31" style="left:1632.20px;top:408.20px;font-size:12.42px;font-weight:700;color:#551a8b;letter-spacing:0.934px;text-decoration:underline;text-underline-offset:1px;">13/04/2024</span><span class="t" id="t32" style="left:142.60px;top:888.70px;font-size:13.29px;font-weight:700;color:#2467f0;letter-spacing:0.006px;">History</span><span class="t" id="t33" style="left:227.00px;top:889.00px;font-size:12.17px;font-weight:700;color:#2467f0;letter-spacing:0.008px;">Pending</span><span class="t" id="t34" style="left:321.60px;top:889.00px;font-size:12.42px;font-weight:700;color:#8f90a6;letter-spacing:0.072px;">Visited</span><span class="t" id="t35" style="left:120.30px;top:936.20px;font-size:12.14px;font-weight:400;color:#8f90a6;letter-spacing:0.010px;">General</span><span class="t" id="t36" style="left:204.50px;top:936.20px;font-size:12.27px;font-weight:400;color:#8f90a6;letter-spacing:0.004px;">demo</span><span class="t" id="t37" style="left:276.40px;top:936.20px;font-size:12.2px;font-weight:400;color:#8f90a6;letter-spacing:0.003px;">English</span><span class="t" id="t38" style="left:1397.70px;top:888.70px;font-size:13.29px;font-weight:700;color:#2467f0;letter-spacing:0.008px;">Cancel</span><span class="t" id="t39" style="left:1535.40px;top:888.70px;font-size:13.0px;font-weight:700;color:#bcbcc0;letter-spacing:-0.092px;">Save</span><span class="t" id="t40" style="left:232.70px;top:463.10px;font-size:14.49px;font-weight:400;color:#f05434;letter-spacing:0.326px;-webkit-text-stroke:.35px #f05434;">Visit Type</span><span class="t" id="t41" style="left:383.75px;top:463.10px;font-size:14.38px;font-weight:400;color:#f05434;letter-spacing:0.002px;-webkit-text-stroke:.35px #f05434;">Physical Exam</span><span class="t" id="t42" style="left:539.75px;top:463.10px;font-size:14.49px;font-weight:400;color:#f05434;letter-spacing:0.217px;-webkit-text-stroke:.35px #f05434;">ARV / Medication</span><span class="t" id="t43" style="left:727.45px;top:463.10px;font-size:14.49px;font-weight:400;color:#f05434;letter-spacing:0.181px;-webkit-text-stroke:.35px #f05434;">Pregnancy</span><span class="t" id="t44" style="left:914.75px;top:463.10px;font-size:14.0px;font-weight:400;color:#f05434;letter-spacing:-0.439px;-webkit-text-stroke:.35px #f05434;">GBV</span><span class="t" id="t45" style="left:1061.90px;top:463.10px;font-size:14.49px;font-weight:400;color:#f05434;letter-spacing:0.092px;-webkit-text-stroke:.35px #f05434;">Viral Load</span><span class="t" id="t46" style="left:1217.40px;top:463.10px;font-size:14.49px;font-weight:400;color:#f05434;letter-spacing:0.354px;-webkit-text-stroke:.35px #f05434;">Biochemistry</span><span class="t" id="t47" style="left:1382.65px;top:463.10px;font-size:14.49px;font-weight:400;color:#f05434;letter-spacing:0.296px;-webkit-text-stroke:.35px #f05434;">Haematology</span><span class="t" id="t48" style="left:472.15px;top:629.10px;font-size:14.49px;font-weight:400;color:#f05434;letter-spacing:0.247px;-webkit-text-stroke:.35px #f05434;">Tuberculosis</span><span class="t" id="t49" style="left:635.10px;top:629.10px;font-size:14.49px;font-weight:400;color:#f05434;letter-spacing:0.376px;-webkit-text-stroke:.35px #f05434;">Index Testing</span><span class="t" id="t50" style="left:808.10px;top:629.10px;font-size:14.49px;font-weight:400;color:#f05434;letter-spacing:0.038px;-webkit-text-stroke:.35px #f05434;">HCV / CrAg</span><span class="t" id="t51" style="left:962.70px;top:629.10px;font-size:14.49px;font-weight:400;color:#f05434;letter-spacing:0.075px;-webkit-text-stroke:.35px #f05434;">Risk Behaviour</span><span class="t" id="t52" style="left:1148.45px;top:629.10px;font-size:14.49px;font-weight:400;color:#f05434;letter-spacing:0.067px;-webkit-text-stroke:.35px #f05434;">Referrals</span></div></body></html>
